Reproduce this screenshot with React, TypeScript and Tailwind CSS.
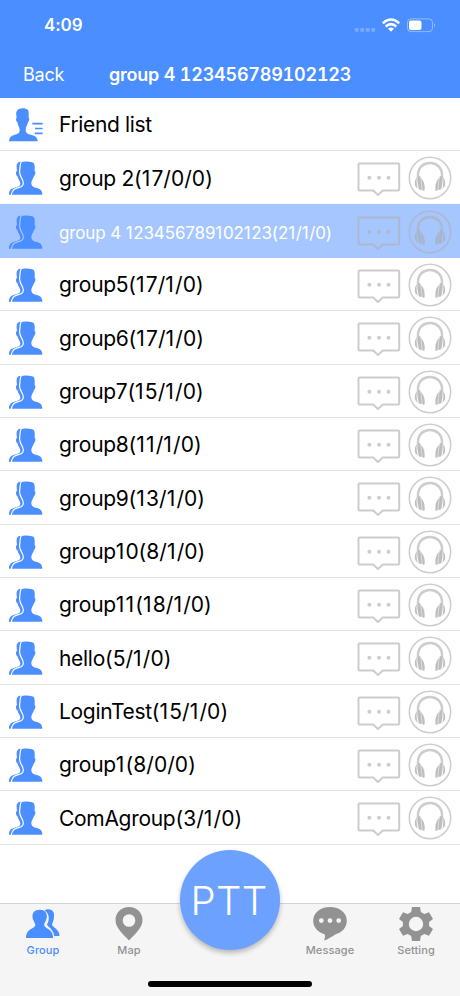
import React from "react";

const groups: [string, string][] = [
  ["group 2", "(17/0/0)"],
  ["group 4 123456789102123", "(21/1/0)"],
  ["group5", "(17/1/0)"],
  ["group6", "(17/1/0)"],
  ["group7", "(15/1/0)"],
  ["group8", "(11/1/0)"],
  ["group9", "(13/1/0)"],
  ["group10", "(8/1/0)"],
  ["group11", "(18/1/0)"],
  ["hello", "(5/1/0)"],
  ["LoginTest", "(15/1/0)"],
  ["group1", "(8/0/0)"],
  ["ComAgroup", "(3/1/0)"],
];

function FriendIcon() {
  return (
    <svg className="h-[34px] w-[34px] shrink-0" viewBox="0 0 102 102" fill="#4a8eff">
      <path d="M24 8C29 1 42 0 49 2C57 3 60 8 59 19L59 29C62 30 61 40 57 42C55 53 50 57 50 65C50 75 56 78 66 80C79 83 86 89 86 100H0C0 89 6 83 17 80C28 77 32 75 32 65C31 57 26 52 25 42C21 40 20 30 23 29C22 20 20 13 24 8Z" />
      <path d="M70 44.500h31v5H70zM78 59h23v5H78zM77 73.500h24v5H77z" />
    </svg>
  );
}

function PeopleIcon({ gap }: { gap: string }) {
  return (
    <svg className="h-[34px] w-[34px] shrink-0" viewBox="0 0 102 102" fill="#4a8eff">
      <path d="M27 5C32 1 38 3 44 2C54 1 62 2 69 4C77 6 78 13 77 30C81 32 79 43 75 45C73 54 67 58 67 66C67 76 74 79 84 81C95 84 100 90 100 101H0C0 90 4 83 16 80C28 77 34 76 34 67C34 60 27 55 25 45C20 43 20 31 24 29C23 20 21 10 27 5Z" />
      <path d="M38 0C32 9 34 17 32 28C31 37 33 43 37 50C42 58 45 67 41 73C36 80 26 79 17 84C9 89 8 96 7 103" fill="none" stroke={gap} strokeWidth="3.600" />
    </svg>
  );
}

function BubbleIcon({ color }: { color: string }) {
  return (
    <svg className="h-[36px] w-[44px] shrink-0" viewBox="0 0 44 36" fill="none" stroke={color} strokeWidth="2" strokeLinejoin="round">
      <path d="M2.500 1.500H41.200Q42.200 1.500 42.200 2.500V27.500Q42.200 28.500 41.200 28.500H25.800L21 33L16.200 28.500H2.500Q1.500 28.500 1.500 27.500V2.500Q1.500 1.500 2.500 1.500Z" />
      <g fill={color} stroke="none">
        <circle cx="12.400" cy="15.700" r="2" />
        <circle cx="22" cy="15.700" r="2" />
        <circle cx="31.500" cy="15.700" r="2" />
      </g>
    </svg>
  );
}

function Cup({ color }: { color: string }) {
  return (
    <g fill={color}>
      <path d="M9.600 20.800L12.300 20L13.800 34L11 33.500Q9.300 28 9.600 20.800Z" />
      <path d="M8.800 21.500Q5.800 25 7.300 30L9.600 33Q8 27 8.800 21.500Z" />
      <path d="M13.200 22Q17.400 27 16.600 34.500L14.700 35Z" />
      <path d="M8.500 22.500L14 22.500L15.800 34L10.500 33Z" opacity=".4" />
    </g>
  );
}

function HeadphonesIcon({ color, cup }: { color: string; cup: string }) {
  return (
    <svg className="h-[44px] w-[44px] shrink-0" viewBox="0 0 44 44" fill="none">
      <circle cx="22" cy="22" r="20.700" strokeWidth="1.500" stroke={color} />
      <path d="M10 22.500V19C10 3 34 3 34 19V22.500" strokeWidth="2.500" stroke={color} />
      <Cup color={cup} />
      <g transform="matrix(-1 0 0 1 44 0)"><Cup color={cup} /></g>
    </svg>
  );
}

function StatusBar() {
  return (
    <div className="flex h-[50px] justify-between pl-[44px] pr-[24px] text-white">
      <span className="pt-[13px] text-[17px] font-semibold leading-[24px] tracking-[-0.1px]">4:09</span>
      <svg className="mt-[16px] h-[18px] w-[82px]" viewBox="354 16 82 18" fill="white">
        <g opacity=".25">
          <rect x="354.700" y="28" width="4" height="3.800" rx="1" />
          <rect x="360.200" y="28" width="4" height="3.800" rx="1" />
          <rect x="365.700" y="28" width="4" height="3.800" rx="1" />
          <rect x="371.200" y="28" width="4" height="3.800" rx="1" />
        </g>
        <g fill="none" stroke="white" strokeWidth="2.500">
          <path d="M382.800 23.300Q391 15.700 399.200 23.300" />
          <path d="M385.700 26.500Q391 21.700 396.300 26.500" />
        </g>
        <path d="M388 28.600Q391 26.200 394 28.600L391 31.800Z" />
        <rect x="407.500" y="18.900" width="25" height="12.700" rx="3.500" fill="none" stroke="white" strokeOpacity=".4" />
        <rect x="409" y="20.500" width="12.500" height="9.500" rx="2" />
        <path d="M434 23.200Q436 25.200 434 27.400Z" opacity=".5" />
      </svg>
    </div>
  );
}

function Spaced({ text, wide }: { text: string; wide: string }) {
  return (
    <>
      {text.split(/(1)/).map((part, i) => (part === "1" ? <span key={i} className={wide}>1</span> : part))}
    </>
  );
}

function Tab({ label, active, children }: { label: string; active?: boolean; children: React.ReactNode }) {
  return (
    <div className={`flex w-[86px] flex-col items-center pt-[3px] ${active ? "text-[#4a8eff]" : "text-[#929292]"}`}>
      <svg className="h-[36px] w-[36px]" viewBox="0 0 36 36" fill="currentColor">{children}</svg>
      <span className="text-[11px] font-medium leading-[14px] tracking-[0.1px]">{label}</span>
    </div>
  );
}

export default function App() {
  return (
    <div className="relative flex h-[996px] w-[460px] flex-col overflow-hidden bg-white font-['Inter','Liberation_Sans',sans-serif]">
      <header className="h-[98px] shrink-0 bg-[#4a8eff] text-white">
        <StatusBar />
        <div className="flex h-[48px] items-center pl-[23px]">
          <span className="w-[86px] text-[18px] tracking-[-0.2px]">Back</span>
          <h1 className="whitespace-nowrap text-[18px] font-semibold tabular-nums tracking-[-0.22px]">group 4 123456789102123</h1>
        </div>
      </header>

      <main className="flex-1">
        <div className="flex h-[53.33px] items-center border-b border-[#e2e2e4] pl-[9px] pt-[2px]">
          <FriendIcon />
          <span className="ml-[16px] text-[21px] tracking-[-0.35px]">Friend list</span>
        </div>
        {groups.map(([name, counts], i) => {
          const selected = i === 1;
          const color = selected ? "#adb8cd" : "#cdcdcd";
          const border = i <= 1 ? "border-[#a5c6ff]" : "border-[#e2e2e4]";
          const wide = selected ? "tracking-[0.6px]" : "tracking-[1.2px]";
          return (
            <div
              key={name}
              className={`flex h-[53.33px] items-center border-b pl-[9px] pr-[8px] pt-[2px] ${border} ${selected ? "bg-[#a5c6ff]" : ""}`}
            >
              <PeopleIcon gap={selected ? "#a5c6ff" : "#ffffff"} />
              <span className={`ml-[16px] flex-1 whitespace-nowrap ${selected ? "pt-[3px] text-[17px] tracking-[-0.13px] text-white" : "text-[21px] tracking-[-0.3px] text-black"}`}>
                <Spaced text={name} wide={wide} />
                <span className={selected ? "tracking-[-0.13px]" : "tracking-[0.05px]"}>
                  <Spaced text={counts} wide={wide} />
                </span>
              </span>
              <div className="flex items-center gap-[7px]">
                <div className="pt-[4px]"><BubbleIcon color={color} /></div>
                <HeadphonesIcon color={color} cup={selected ? "#a9b4c9" : "#bfbfbf"} />
              </div>
            </div>
          );
        })}
      </main>

      <nav className="flex h-[93px] shrink-0 border-t border-[#d4d4d6] bg-[#f6f5f6]">
        <Tab label="Group" active>
          <path d="M19.500 3.200C25 .8 30 3.800 29 9.500C29 13.500 27.500 15.500 27 17.500C27 20 34.500 22 34.500 29H29.200C28 21 22 19.500 22 17.200C24 14.500 25.600 7.500 19.500 3.200Z" />
          <path d="M14.700 2.800C20 2.800 22.200 6 21.800 10C21.500 14 19.200 15.500 19.200 17.800C19.200 22 28 21 28.200 31H1C1.200 21 10.300 22 10.300 17.800C10.300 15.500 7.800 14 7.500 10C7.200 6 9.500 2.800 14.700 2.800Z" />
        </Tab>
        <Tab label="Map">
          <path fillRule="evenodd" d="M18 0C10.200 0 4.500 5.800 4.500 13C4.500 21 12 27 18 33.500C24 27 31.500 21 31.500 13C31.500 5.800 25.800 0 18 0ZM18 7.200A6.300 6.300 0 1 1 18 19.800A6.300 6.300 0 1 1 18 7.200Z" />
        </Tab>
        <div className="w-[115px]" />
        <Tab label="Message">
          <path fillRule="evenodd" d="M18 0C8.200 0 1.200 5.800 1.200 14C1.200 20.200 5.800 25.200 12.500 27.200C13.400 28.500 13 31 12 33.500C16 32.400 20 29.500 23.200 27.500C30.200 25.500 34.800 20.500 34.800 14C34.800 5.800 27.800 0 18 0ZM9.300 11.200A2.400 2.400 0 1 1 9.300 16A2.400 2.400 0 1 1 9.300 11.200ZM18 11.200A2.400 2.400 0 1 1 18 16A2.400 2.400 0 1 1 18 11.200ZM26.700 11.200A2.400 2.400 0 1 1 26.700 16A2.400 2.400 0 1 1 26.700 11.200Z" />
        </Tab>
        <Tab label="Setting">
          <path fillRule="evenodd" d="M14 0H22L22.800 5L26.300 7L31 5.200L35 12L31.100 15V19L35 22L31 28.800L26.300 27L22.800 29L22 34H14L13.200 29L9.700 27L5 28.800L1 22L4.900 19V15L1 12L5 5.200L9.700 7L13.200 5ZM18 9.800A7.200 7.200 0 1 0 18 24.200A7.200 7.200 0 1 0 18 9.800Z" />
        </Tab>
      </nav>

      <button className="absolute left-[180px] top-[849.5px] flex h-[100px] w-[100px] items-center justify-center rounded-full bg-[#6ca1ff] pr-[2px] pt-[3px] text-[40px] font-light tracking-[0.3px] text-white shadow-[0_3px_5px_rgba(0,0,0,0.25)]">
        PTT
      </button>
      <div className="absolute left-[148px] top-[981px] h-[6px] w-[164px] rounded-full bg-black" />
    </div>
  );
}
